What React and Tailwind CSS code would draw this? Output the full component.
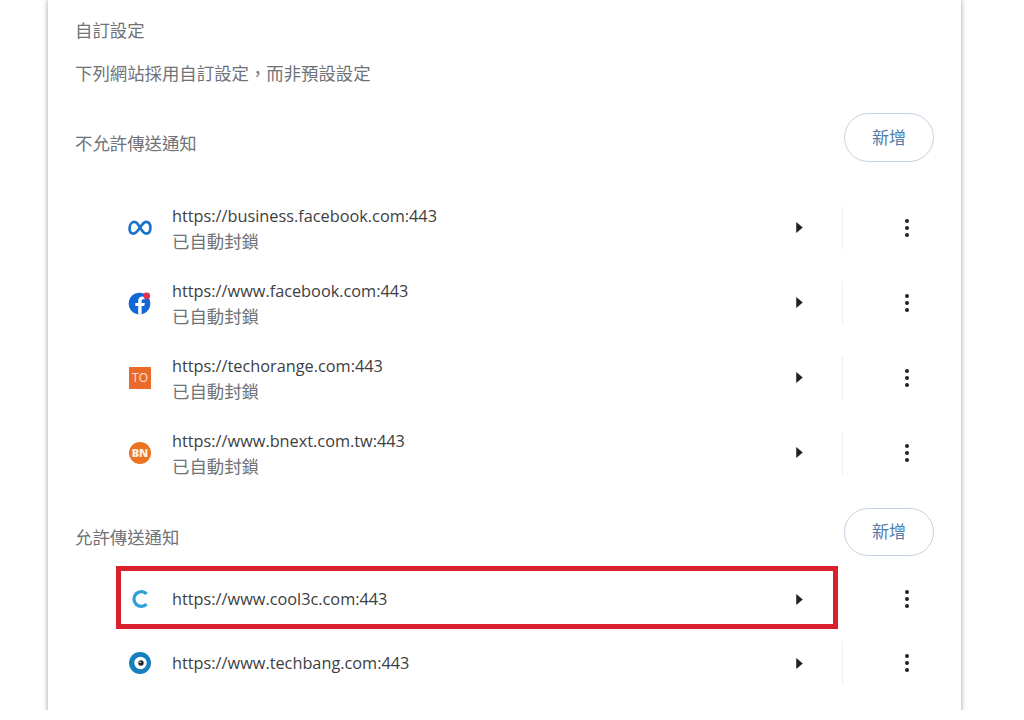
const cjk = "font-['Segoe_UI','Open_Sans','Noto_Sans_CJK_TC',sans-serif]";

function MetaIcon() {
  return (
    <svg viewBox="0 0 24 24" className="h-[24px] w-[24px]" fill="none" aria-hidden="true">
      <path
        d="M12 11.6C10.2 8.2 8.7 5.9 6.3 5.9 3.4 5.9 1.6 9 1.6 12.7c0 2.9 1.5 4.9 3.9 4.9 2.5 0 4-2.3 6.5-6 2.5-3.7 4-6 6.5-5.7 2.5.3 3.9 2.7 3.9 5.8 0 3.7-1.8 5.9-4.3 5.9-2.4 0-3.9-2.6-6.1-6Z"
        stroke="#1a74c9"
        strokeWidth="2.7"
        strokeLinejoin="round"
      />
    </svg>
  );
}

function FacebookIcon() {
  return (
    <svg viewBox="0 0 24 24" className="h-[24px] w-[24px]" aria-hidden="true">
      <circle cx="11.5" cy="12.5" r="10.8" fill="#1266d6" />
      <path
        d="M13.6 23.2v-8.1h2.7l.5-3.2h-3.2V10c0-1 .4-1.7 1.8-1.7h1.5V5.6c-.6-.1-1.5-.2-2.4-.2-2.7 0-4.3 1.6-4.3 4.2v2.3H7.3v3.2h2.9v8.1Z"
        fill="#fff"
      />
      <circle cx="18.7" cy="4.8" r="3.4" fill="#e0314e" />
    </svg>
  );
}

function TechOrangeIcon() {
  return (
    <div className="flex h-[22px] w-[22px] items-center justify-center bg-[#ea6a2c] font-['Open_Sans',sans-serif] text-[12px] leading-none text-[#fbe3d6]">
      TO
    </div>
  );
}

function BnextIcon() {
  return (
    <div className="flex h-[22px] w-[22px] items-center justify-center rounded-full bg-[#ec7421] font-['Open_Sans',sans-serif] text-[11px] font-extrabold leading-none text-[#fdeee3]">
      BN
    </div>
  );
}

function CoolIcon() {
  return (
    <svg viewBox="0 0 24 24" className="h-[24px] w-[24px]" fill="none" aria-hidden="true">
      <path d="M18.6 6.8a7.4 7.4 0 1 0 0 10.4" stroke="#2f9fd8" strokeWidth="3.2" strokeLinecap="butt" />
    </svg>
  );
}

function TechbangIcon() {
  return (
    <svg viewBox="0 0 24 24" className="h-[24px] w-[24px]" aria-hidden="true">
      <circle cx="12" cy="12" r="11" fill="#1580bd" />
      <circle cx="12.5" cy="12" r="6.2" fill="#fff" />
      <circle cx="13" cy="12" r="2.7" fill="#22262a" />
      <circle cx="12.2" cy="11.2" r="0.8" fill="#fff" />
    </svg>
  );
}

function SiteRow({ icon, url, status, height, noDivider }) {
  return (
    <div className={`flex items-center pr-[42px] ${height}`}>
      <div className="flex w-[48px] shrink-0 justify-center">{icon}</div>
      <div className="ml-[8px] flex min-w-0 flex-1 flex-col">
        <div className={`${cjk} text-[16.3px] leading-[26px] text-[#3c4043]`}>{url}</div>
        {status && <div className={`${cjk} text-[17.4px] leading-[24px] text-[#6f7276]`}>{status}</div>}
      </div>
      <div className="flex w-[32px] shrink-0 justify-center">
        <svg viewBox="0 0 8 12" className="h-[13px] w-[9px]" aria-hidden="true">
          <path d="M1 1l6 5-6 5Z" fill="#202124" />
        </svg>
      </div>
      <div className={`ml-[27px] h-[44px] w-px shrink-0 ${noDivider ? "" : "bg-[#eeeff0]"}`} />
      <div className="ml-[52px] flex w-[24px] shrink-0 justify-center">
        <svg viewBox="0 0 6 18" className="h-[18px] w-[6px]" aria-hidden="true">
          <circle cx="3" cy="2" r="2" fill="#202124" />
          <circle cx="3" cy="9" r="2" fill="#202124" />
          <circle cx="3" cy="16" r="2" fill="#202124" />
        </svg>
      </div>
    </div>
  );
}

function SectionHeader({ label, height, labelTop }) {
  return (
    <div className={`flex items-start justify-between pr-[27px] ${height}`}>
      <div className={`${cjk} ${labelTop} text-[17.4px] leading-[24px] text-[#6f7276]`}>{label}</div>
      <button
        type="button"
        className={`${cjk} h-full w-[90px] rounded-full border border-[#c5d3e0] bg-white text-[17px] text-[#4f7cac]`}
      >
        新增
      </button>
    </div>
  );
}

export default function App() {
  return (
    <div className="h-[720px] w-[1024px] overflow-hidden bg-white">
      <div className="h-[710px] overflow-hidden">
        <div className="relative ml-[48px] h-[720px] w-[913px] bg-white pl-[27px] shadow-[0_0_5px_rgba(0,0,0,0.4)]">
          <div className={`${cjk} flex h-[61px] items-center text-[17.4px] text-[#6f7276]`}>自訂設定</div>
          <div className={`${cjk} flex h-[24px] items-center text-[17.4px] text-[#6f7276]`}>
            下列網站採用自訂設定，而非預設設定
          </div>

          <div className="mt-[28px]">
            <SectionHeader label="不允許傳送通知" height="h-[49px]" labelTop="mt-[18px]" />
          </div>
          <div className="mt-[28px] pl-[41px]">
            <SiteRow icon={<MetaIcon />} url="https://business.facebook.com:443" status="已自動封鎖" height="h-[75px]" />
            <SiteRow icon={<FacebookIcon />} url="https://www.facebook.com:443" status="已自動封鎖" height="h-[75px]" />
            <SiteRow icon={<TechOrangeIcon />} url="https://techorange.com:443" status="已自動封鎖" height="h-[75px]" />
            <SiteRow icon={<BnextIcon />} url="https://www.bnext.com.tw:443" status="已自動封鎖" height="h-[75px]" />
          </div>

          <div className="mt-[18px]">
            <SectionHeader label="允許傳送通知" height="h-[48px]" labelTop="mt-[17px]" />
          </div>
          <div className="mt-[11px] pl-[41px]">
            <SiteRow icon={<CoolIcon />} url="https://www.cool3c.com:443" height="h-[64px]" noDivider />
            <SiteRow icon={<TechbangIcon />} url="https://www.techbang.com:443" height="h-[64px]" />
          </div>

          {/* red highlight drawn over the first allowed site */}
          <div className="absolute left-[68px] top-[566px] h-[63px] w-[722px] border-[5px] border-[#d9202c]" />
        </div>
      </div>
    </div>
  );
}
